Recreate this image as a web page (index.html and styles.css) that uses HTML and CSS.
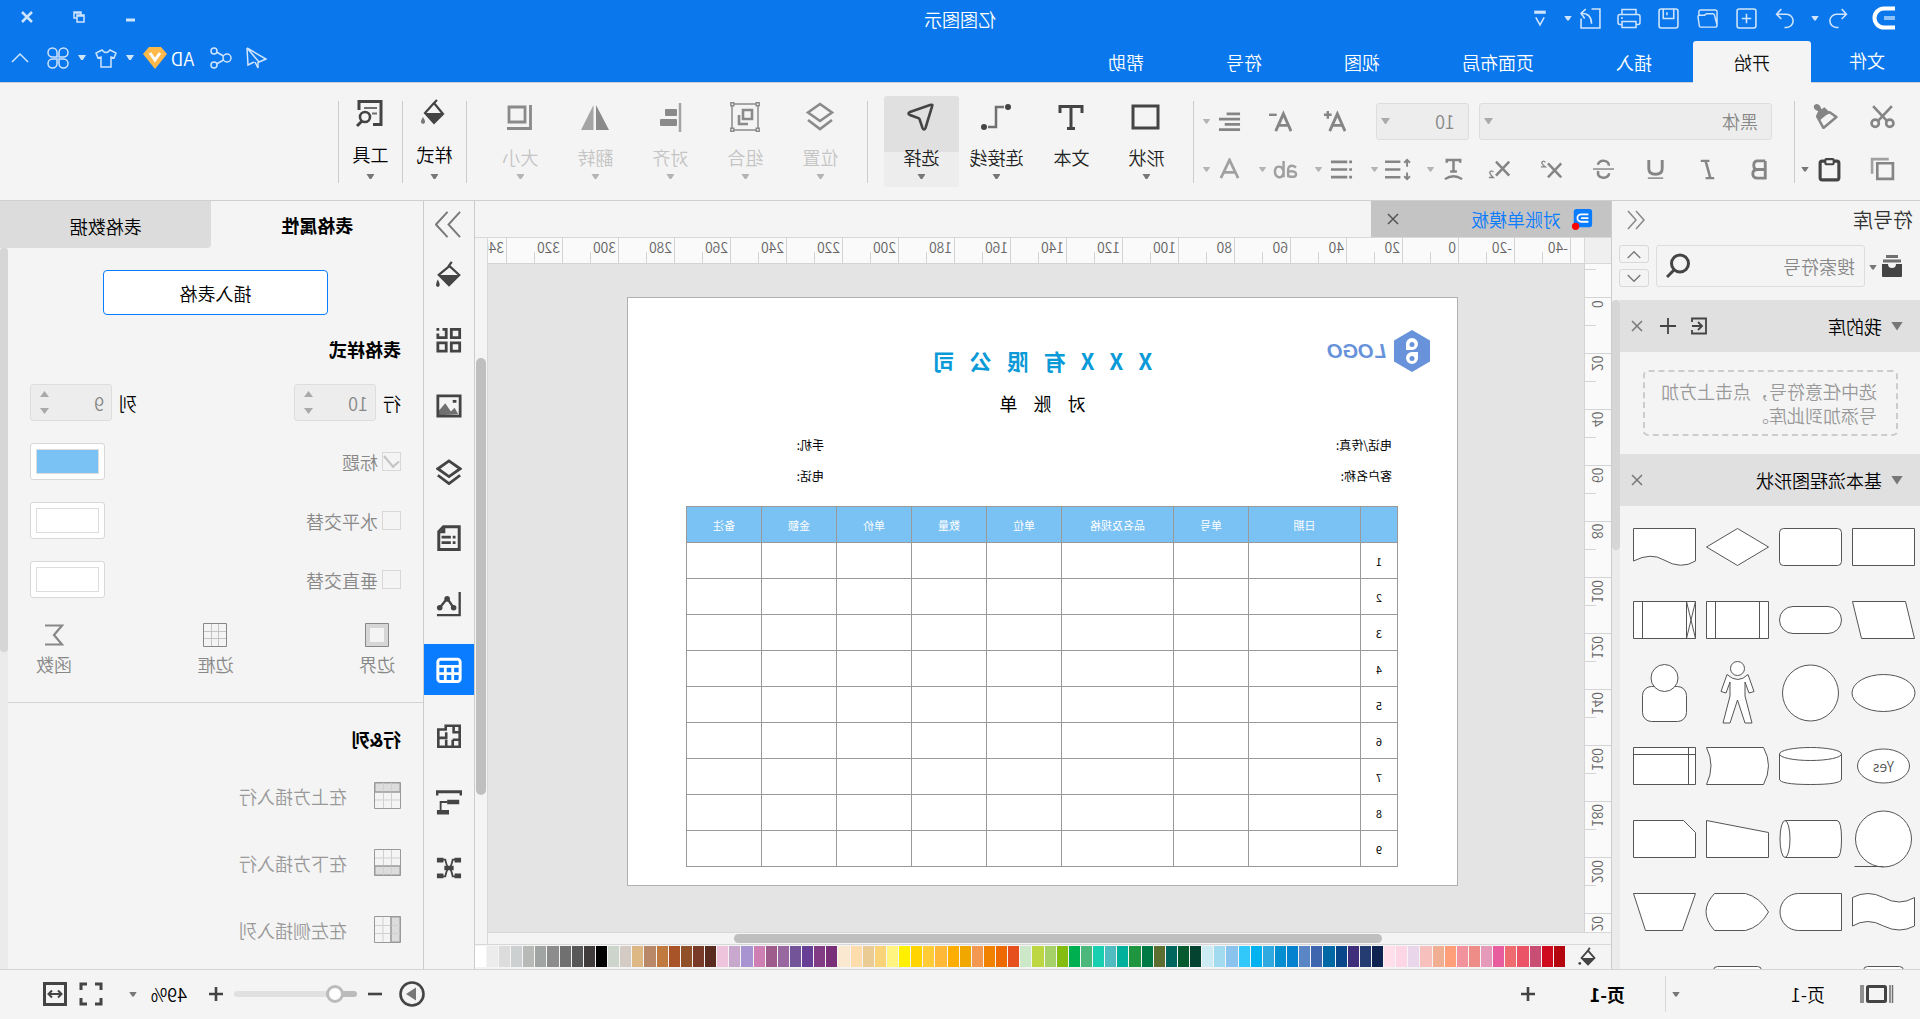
FILE: index.html
```html
<!DOCTYPE html>
<html lang="zh-CN">
<head>
<meta charset="utf-8">
<title>亿图图示</title>
<link rel="stylesheet" href="styles.css">
</head>
<body>
<div class="app">

<header class="top">
  <div class="titlebar">
    <div class="quick">
      <svg class="brand" viewBox="0 0 24 24" width="24" height="24"><path d="M1 2.500H12a9.500 9.500 0 0 1 0 19H1" stroke="#fff" stroke-width="4"/><path d="M1 12H12" stroke="#8cc0f8" stroke-width="4"/></svg>
      <button class="q" aria-label="撤销"><svg viewBox="0 0 20 20"><path d="M6 1 1.500 6 6 10.500M2 6h9a6 6 0 0 1 0 12.500H9"/></svg></button>
      <i class="caret light"></i>
      <button class="q" aria-label="重做"><svg viewBox="0 0 20 20"><path d="M14 1l4.500 5L14 10.500M18 6H9a6 6 0 0 0 0 12.500h2"/></svg></button>
      <button class="q" aria-label="新建"><svg viewBox="0 0 20 20"><rect x="1" y="1" width="18" height="18" rx="2"/><path d="M10 5.500v9M5.500 10h9"/></svg></button>
      <button class="q" aria-label="打开"><svg viewBox="0 0 22 20"><path d="M1 17V3q0-2 2-2h15q2 0 2 2v4M3 19h15q1 0 1.500-1L21 8q0-1.500-2-1.500h-5L12 5H5.500q-1.500 0-2 2L1 17q0 2 2 2z"/></svg></button>
      <button class="q" aria-label="保存"><svg viewBox="0 0 20 20"><rect x="1" y="1" width="18" height="18" rx="2"/><path d="M5 1v9h10V1M11.500 4v3"/></svg></button>
      <button class="q wide" aria-label="打印"><svg viewBox="0 0 24 20"><path d="M5 6V1h14v5M5 16H3q-2 0-2-2V8q0-2 2-2h18q2 0 2 2v6q0 2-2 2h-2M5 13h14v6H5zM18 9.500h2"/></svg></button>
      <button class="q" aria-label="导出"><svg viewBox="0 0 20 20"><path d="M9 1H1v18h18v-9M19 5Q9 5 9 15M14.500 1 19 5l-3.500 5"/></svg></button>
      <i class="caret light"></i>
      <button class="q last" aria-label="自定义"><svg viewBox="0 0 20 20"><path d="M5 4h11" stroke-width="3"/><path d="M6.500 9l4 7 4-7"/></svg></button>
    </div>
    <h1>亿图图示</h1>
    <div class="win">
      <button aria-label="最小化"><svg viewBox="0 0 14 14"><path d="M3 10h9" stroke-width="3"/></svg></button>
      <button aria-label="还原"><svg viewBox="0 0 14 14"><path d="M2 5h7v7H2zM5 5V2h7v6H9M2 6h7M5 3h7"/></svg></button>
      <button aria-label="关闭"><svg viewBox="0 0 14 14"><path d="M2 2l10 10M12 2L2 12" stroke-width="2.500"/></svg></button>
    </div>
  </div>
  <nav class="menubar">
    <button class="tab file">文件</button>
    <button class="tab on">开始</button>
    <button class="tab">插入</button>
    <button class="tab">页面布局</button>
    <button class="tab">视图</button>
    <button class="tab">符号</button>
    <button class="tab">帮助</button>
    <div class="account">
      <svg viewBox="0 0 22 22"><path d="M20 1 1 12l7 3zM20 1l-1 17-6-3M8 15l12-14M9 15v6l3-6"/></svg>
      <svg viewBox="0 0 22 22"><circle cx="5" cy="11" r="4"/><circle cx="18" cy="4" r="3"/><circle cx="18" cy="18" r="3"/><path d="M8.500 9l7-4M8.500 13l7 4"/></svg>
      <span class="user">AD<svg viewBox="0 0 24 22"><path d="M6 0h12l6 7-12 15L0 7z" fill="#ffb84a" stroke="none"/><path d="M7 6l5 7 5-7" stroke="#fff" stroke-width="3"/></svg></span>
      <i class="caret light"></i>
      <svg viewBox="0 0 22 22"><path d="M7 3 1 6l2 5 3-1v10h10V10l3 1 2-5-6-3q-4 5-8 0z"/></svg>
      <i class="caret light"></i>
      <svg viewBox="0 0 22 22"><path d="M10 10V5.500a4.500 4.500 0 1 0-4.500 4.500zM12 10h4.500A4.500 4.500 0 1 0 12 5.500zM10 12H5.500a4.500 4.500 0 1 0 4.500 4.500zM12 12v4.500a4.500 4.500 0 1 0 4.500-4.500z"/></svg>
      <svg class="chev" viewBox="0 0 22 22"><path d="M3 15l8-8 8 8"/></svg>
    </div>
  </nav>
</header>

<section class="ribbon">
  <div class="clip">
    <button aria-label="剪切"><svg viewBox="0 0 24 24"><path d="M3 2l13 14M21 2L8 16" stroke-width="2.500"/><circle cx="5" cy="18.500" r="3.500" stroke-width="2.500"/><circle cx="19" cy="18.500" r="3.500" stroke-width="2.500"/></svg></button>
    <button aria-label="格式刷"><svg viewBox="0 0 24 24"><path d="M8 8 1.500 12.500 14 23l6-11z" stroke-width="2.400" stroke-linejoin="round"/><path d="M8 8l5-5 3 2q1-5 5-5 3 1 2 4-1 2-4 3l2 4-3 5z" fill="currentColor" stroke="none"/></svg></button>
    <button aria-label="复制"><svg viewBox="0 0 24 24"><path d="M2 6h15v15H2z" stroke-width="2.500"/><path d="M6 2h16v14" stroke-width="2.500" opacity=".75"/></svg></button>
    <button class="dark" aria-label="粘贴"><svg viewBox="0 0 24 24"><rect x="3" y="4" width="18" height="18" rx="2" stroke-width="3"/><rect x="8" y="2" width="8" height="5" rx="1" fill="#f4f4f4" stroke-width="2"/></svg><i class="caret"></i></button>
  </div>
  <div class="font">
    <div class="line one">
      <select class="face" aria-label="字体"><option>黑体</option></select>
      <select class="size" aria-label="字号"><option>10</option></select>
      <button class="w54" aria-label="增大字号"><svg viewBox="0 0 24 24"><path d="M1 22 9 4l8 18M4 16h10" stroke-width="3"/><path d="M15 5h8M19 1v8" stroke-width="2.500"/></svg></button>
      <button class="w54" aria-label="减小字号"><svg viewBox="0 0 24 24"><path d="M1 22 9 4l8 18M4 16h10" stroke-width="3"/><path d="M16 5h8" stroke-width="2.500"/></svg></button>
      <button class="split" aria-label="对齐"><svg viewBox="0 0 24 24"><path d="M1 4h14M1 9.500h22M1 15h16M1 20.500h22" stroke-width="2.800"/></svg><i class="caret pale"></i></button>
    </div>
    <div class="line two">
      <button aria-label="加粗"><svg viewBox="0 0 24 24"><path d="M6 3h8q4 0 4 4.500T14 12H6M14 12q5 0 5 4.500T14 21H6V3" stroke-width="3"/></svg></button>
      <button aria-label="斜体"><svg viewBox="0 0 24 24"><path d="M10 3h9M5 21h9M14 3l-5 18" stroke-width="2.600"/></svg></button>
      <button aria-label="下划线"><svg viewBox="0 0 24 24"><path d="M5 2v9q0 6 7 6t7-6V2" stroke-width="3"/><path d="M4 21h16" stroke-width="1.500"/></svg></button>
      <button aria-label="删除线"><svg viewBox="0 0 24 24"><path d="M18 7q-2-5-7-4-5 1-4.500 5M6 16q1 5 7 4.500 6-1 4.500-7" stroke-width="2.600"/><path d="M1 11.500h22" stroke-width="1.500"/></svg></button>
      <button aria-label="上标"><svg viewBox="0 0 26 24"><path d="M2 5l15 16M17 5L2 21" stroke-width="2.800"/><path d="M20 4q2-3 4 0 0 2-4 5h5" stroke-width="1.500"/></svg></button>
      <button aria-label="下标"><svg viewBox="0 0 26 24"><path d="M2 3l15 16M17 3L2 19" stroke-width="2.800"/><path d="M20 15q2-3 4 0 0 2-4 6h5" stroke-width="1.500"/></svg></button>
      <button class="split" aria-label="文字方向"><svg viewBox="0 0 24 24"><path d="M5 5V2h14v3M12 2v12M8.500 14h7" stroke-width="2.600"/><path d="M3 22q9-6 18 0" stroke-width="2.400"/></svg><i class="caret pale"></i></button>
      <button class="split" aria-label="行距"><svg class="xl" viewBox="0 0 28 24"><path d="M11 4h16M11 12h16M11 20h16" stroke-width="2.600"/><path d="M4 2v7M1 5l3-3 3 3M4 22v-7M1 19l3 3 3-3" stroke-width="2"/></svg><i class="caret pale"></i></button>
      <button class="split" aria-label="项目符号"><svg viewBox="0 0 24 24"><path d="M6 4h17M6 12h17M6 20h17M1 4h3M1 12h3M1 20h3" stroke-width="2.800"/></svg><i class="caret pale"></i></button>
      <button class="split faint" aria-label="文字底色"><svg class="xl" viewBox="0 0 26 24"><path d="M2 10q4-3 7-1 2 1 1 11M10 14q-8-1-8 3t8 2M15 3v17M15 14q1-5 5-5t4 5-4 6-5-5" stroke-width="2.600"/></svg><i class="caret pale"></i></button>
      <button class="split faint" aria-label="字体颜色"><svg viewBox="0 0 24 24"><path d="M3 21 12 2l9 19M6 15h12" stroke-width="2.800"/></svg><i class="caret pale"></i></button>
    </div>
  </div>
  <div class="group">
    <button class="big"><svg viewBox="0 0 30 30"><rect x="3" y="4" width="25" height="22" stroke-width="3"/></svg><span>形状</span><i class="caret"></i></button>
    <button class="big"><svg viewBox="0 0 30 30"><path d="M4 11V4.500h22V11M15 5v21" stroke-width="3"/><path d="M11 26.500h8" stroke-width="3"/></svg><span>文本</span></button>
    <button class="big"><svg viewBox="0 0 30 30"><circle cx="3" cy="5" r="3" fill="currentColor" stroke="none"/><circle cx="27" cy="25" r="3" fill="currentColor" stroke="none"/><path d="M7 5h8v20h8" stroke-width="2.500" opacity=".75"/></svg><span>连接线</span><i class="caret"></i></button>
    <button class="big on"><svg viewBox="0 0 30 30"><path d="M4 4.500q-1.500-2.500 2-1.500l20 7q3 1.500 0 3l-8 3q-1 0-1.500 1l-3 9q-1.500 3-3 0z" stroke-width="2.600"/></svg><span>选择</span><i class="caret"></i></button>
  </div>
  <div class="group">
    <button class="big off"><svg viewBox="0 0 30 30"><path d="M15 2 27 10.500 15 19 3 10.500zM3 18l12 9 12-9" stroke-width="2.600"/></svg><span>位置</span><i class="caret pale"></i></button>
    <button class="big off"><svg viewBox="0 0 30 30"><path d="M2 2h26v26H2z" stroke-width="1.500"/><path d="M8 8h9v9H8zM21 13v9h-9" stroke-width="2.600"/><path d="M.800.800h3v3h-3zM26.200.800h3v3h-3zM.800 26.200h3v3h-3zM26.200 26.200h3v3h-3z" fill="#f4f4f4" stroke-width="1.400"/></svg><span>组合</span><i class="caret pale"></i></button>
    <button class="big off"><svg viewBox="0 0 30 30"><path d="M5 1v29" stroke-width="2.500" opacity=".75"/><rect x="8" y="7" width="12" height="7" rx="1" fill="currentColor" stroke="none"/><rect x="8" y="17" width="17" height="7" rx="1" fill="currentColor" stroke="none"/></svg><span>对齐</span><i class="caret pale"></i></button>
    <button class="big off"><svg viewBox="0 0 30 30"><path d="M14 3v25H1z" fill="currentColor" stroke="none"/><path d="M16.500 3v25H29z" fill="currentColor" stroke="none" opacity=".75"/></svg><span>翻转</span><i class="caret pale"></i></button>
    <button class="big off"><svg viewBox="0 0 30 30"><path d="M10 5h16v15H10z" stroke-width="2.800"/><path d="M4.500 3v23.500H28" stroke-width="2.800"/></svg><span>大小</span><i class="caret pale"></i></button>
  </div>
  <div class="group slim">
    <button class="big"><svg viewBox="0 0 30 30"><path d="M12 2l3 3-9 11 9 9 9-10-9-10" stroke-width="2.200"/><path d="M6 15h18l-9 10z" fill="currentColor" stroke="none"/><path d="M26 19q4 6 0 7-4-1 0-7z" fill="currentColor" stroke="none" opacity=".7"/></svg><span>样式</span><i class="caret"></i></button>
  </div>
  <div class="group slim">
    <button class="big"><svg viewBox="0 0 30 30"><path d="M12 26.500H4v-23h22V12" stroke-width="3"/><path d="M8 10h13M8 15.500h5" stroke-width="2.200" opacity=".75"/><circle cx="20" cy="19" r="5" stroke-width="2.600"/><path d="M23 23l5 5" stroke-width="3"/></svg><span>工具</span><i class="caret"></i></button>
  </div>
</section>

<main class="work">

<aside class="library">
  <div class="libhead"><span>符号库</span><svg viewBox="0 0 20 20"><path d="M10 1 2 10l8 9M18 1l-8 9 8 9"/></svg></div>
  <div class="find">
    <svg class="drawer" viewBox="0 0 22 22"><path d="M5 1.500h12M2 6h18" stroke-width="3" opacity=".75"/><path d="M1 9h6q0 4 4 4t4-4h6v12q0 1-1 1H2q-1 0-1-1z" fill="currentColor" stroke="none"/></svg>
    <i class="caret"></i>
    <label class="box"><input type="text" placeholder="搜索符号" aria-label="搜索符号"><svg viewBox="0 0 24 24"><circle cx="10" cy="9.500" r="8.500" stroke-width="3"/><path d="M16 16l7 7" stroke-width="3"/></svg></label>
    <div class="updown">
      <button aria-label="上一个"><svg viewBox="0 0 20 12"><path d="M3 10l7-7 7 7"/></svg></button>
      <button aria-label="下一个"><svg viewBox="0 0 20 12"><path d="M3 2l7 7 7-7"/></svg></button>
    </div>
  </div>
  <div class="libbody">
    <div class="libscroll">
      <div class="sect"><i class="tri"></i><b>我的库</b>
        <svg viewBox="0 0 18 18"><path d="M16 5V1.500H2v15h14V13" stroke-width="1.800"/><path d="M16 9H6M10 5 6 9l4 4" stroke-width="1.800"/></svg>
        <svg viewBox="0 0 18 18"><path d="M9 1v16M1 9h16" stroke-width="1.800"/></svg>
        <svg class="x" viewBox="0 0 18 18"><path d="M4 4l10 10M14 4L4 14"/></svg></div>
      <p class="hint">选中任意符号，点击上方加号添加到此库。</p>
      <div class="sect"><i class="tri"></i><b>基本流程图形状</b>
        <svg class="x" viewBox="0 0 18 18"><path d="M4 4l10 10M14 4L4 14"/></svg></div>
      <div class="shapes">
        <svg viewBox="0 0 73 73"><path d="M5.500 18.500h62v37h-62z"/></svg>
        <svg viewBox="0 0 73 73"><rect x="5.500" y="18.500" width="62" height="37" rx="4"/></svg>
        <svg viewBox="0 0 73 73"><path d="M36.500 18.500 67.500 37l-31 18.500L5.500 37z"/></svg>
        <svg viewBox="0 0 73 73"><path d="M5.500 18.500h62V51Q50 42 37 50 20 60 5.500 51z"/></svg>
        <svg viewBox="0 0 73 73"><path d="M14.500 18.500h53l-9 37h-53z"/></svg>
        <svg viewBox="0 0 73 73"><rect x="5.500" y="23.500" width="62" height="27" rx="13.500"/></svg>
        <svg viewBox="0 0 73 73"><path d="M5.500 18.500h62v37h-62zM14.500 18.500v37M58.500 18.500v37"/></svg>
        <svg viewBox="0 0 73 73"><path d="M5.500 18.500h62v37h-62zM14.500 18.500v37M58.500 18.500v37M5.500 18.500l9 37M14.500 18.500l-9 37"/></svg>
        <svg viewBox="0 0 73 73"><ellipse cx="36.500" cy="37" rx="31.500" ry="18.500"/></svg>
        <svg viewBox="0 0 73 73"><circle cx="36.500" cy="37" r="28"/></svg>
        <svg viewBox="0 0 73 73"><circle cx="36.500" cy="12.500" r="7"/><path d="M26 18.500q10 10 21 0l6 17-5 1.500-4-11V40l7 27h-7l-7.500-23L29 67h-7l7-27V26l-4 11-5-1.500z"/></svg>
        <svg viewBox="0 0 73 73"><rect x="14.500" y="30.500" width="44" height="35" rx="9"/><circle cx="36.500" cy="22" r="13.500"/></svg>
        <svg viewBox="0 0 73 73"><ellipse cx="36.500" cy="37" rx="26" ry="17"/><text x="36.500" y="43">Yes</text></svg>
        <svg viewBox="0 0 73 73"><path d="M5.500 25v25q0 5.500 31 5.500t31-5.500V25"/><ellipse cx="36.500" cy="25" rx="31" ry="6.500"/></svg>
        <svg viewBox="0 0 73 73"><path d="M10.500 18.500h57q-9 18 0 37h-57q-10-19 0-37z"/></svg>
        <svg viewBox="0 0 73 73"><path d="M5.500 18.500h62v37h-62zM12.500 18.500v37M5.500 25.500h62"/></svg>
        <svg viewBox="0 0 73 73"><circle cx="36.500" cy="37" r="28"/><path d="M36.500 64.500h29"/></svg>
        <svg viewBox="0 0 73 73"><path d="M62 18.500H10Q5.500 19 5.500 37T10 55.500h52"/><ellipse cx="62" cy="37" rx="5" ry="18.500"/></svg>
        <svg viewBox="0 0 73 73"><path d="M5.500 30.500l62-12v37h-62z"/></svg>
        <svg viewBox="0 0 73 73"><path d="M17.500 18.500h50v37h-62v-25z"/></svg>
        <svg viewBox="0 0 73 73"><path d="M5.500 22.500q15 9 31 0 16-8 31 0V51q-15-9-31 0-16 8-31 0z"/></svg>
        <svg viewBox="0 0 73 73"><path d="M5.500 18.500h43a18.500 18.500 0 0 1 0 37h-43z"/></svg>
        <svg viewBox="0 0 73 73"><path d="M5.500 37q9-15 23-18.500h31q17 18 0 37h-31Q14 52 5.500 37z"/></svg>
        <svg viewBox="0 0 73 73"><path d="M5.500 18.500h62l-12 37h-37z"/></svg>
        <svg viewBox="0 0 73 73"><rect x="16.500" y="18.500" width="40" height="37" rx="4"/></svg>
        <svg viewBox="0 0 73 73"></svg>
        <svg viewBox="0 0 73 73"><rect x="12.500" y="18.500" width="48" height="37" rx="4"/></svg>
      </div>
    </div>
    <div class="bar"><i class="thumb lib"></i></div>
  </div>
</aside>

<section class="editor">
  <div class="doctabs"><div class="doctab">
    <svg viewBox="0 0 24 24"><rect x="1" y="1" width="20" height="20" rx="3" fill="#0a7cff" stroke="none"/><path d="M5 7h8a4 4 0 0 1 0 8H5M5 11h8" stroke="#fff" stroke-width="2"/><circle cx="19" cy="20" r="4" fill="#f00" stroke="none"/></svg>
    <a href="#doc">对账单模板</a>
    <svg class="x" viewBox="0 0 18 18"><path d="M4 4l10 10M14 4L4 14"/></svg>
  </div></div>
  <div class="stage">
    <div class="corner"></div>
    <div class="ruler h" id="rh"></div>
    <div class="vbar"><i class="thumb tall"></i></div>
    <div class="ruler v" id="rv"></div>
    <div class="canvas">
      <article class="sheet" id="doc">
        <header class="sheethead">
          <div class="logo"><svg viewBox="0 0 36 42"><path d="M18 0l18 10.500v21L18 42 0 31.500v-21z" fill="#6893da" stroke="none"/><path d="M24 20V14a6 6 0 1 0-6 6zM12 22h6a6 6 0 1 1-6 6z" fill="#fff" stroke="none"/><circle cx="18" cy="14.500" r="2.500" fill="#6893da" stroke="none"/><circle cx="18" cy="28.500" r="2.500" fill="#6893da" stroke="none"/></svg><em>LOGO</em></div>
          <h2>X   X   X   有   限   公   司</h2>
        </header>
        <h3>对    账    单</h3>
        <div class="contact"><span>电话/传真:</span><span>手机:</span><span>客户名称:</span><span>电话:</span></div>
        <table>
          <colgroup><col class="c0"><col class="c2"><col class="c1"><col class="c2"><col class="c1"><col class="c1"><col class="c1"><col class="c1"><col class="c1"></colgroup>
          <thead><tr><th></th><th>日期</th><th>单号</th><th>品名及规格</th><th>单位</th><th>数量</th><th>单价</th><th>金额</th><th>备注</th></tr></thead>
          <tbody>
            <tr><td>1</td><td></td><td></td><td></td><td></td><td></td><td></td><td></td><td></td></tr>
            <tr><td>2</td><td></td><td></td><td></td><td></td><td></td><td></td><td></td><td></td></tr>
            <tr><td>3</td><td></td><td></td><td></td><td></td><td></td><td></td><td></td><td></td></tr>
            <tr><td>4</td><td></td><td></td><td></td><td></td><td></td><td></td><td></td><td></td></tr>
            <tr><td>5</td><td></td><td></td><td></td><td></td><td></td><td></td><td></td><td></td></tr>
            <tr><td>6</td><td></td><td></td><td></td><td></td><td></td><td></td><td></td><td></td></tr>
            <tr><td>7</td><td></td><td></td><td></td><td></td><td></td><td></td><td></td><td></td></tr>
            <tr><td>8</td><td></td><td></td><td></td><td></td><td></td><td></td><td></td><td></td></tr>
            <tr><td>9</td><td></td><td></td><td></td><td></td><td></td><td></td><td></td><td></td></tr>
          </tbody>
        </table>
      </article>
    </div>
    <div class="hbar"><i class="thumb wide"></i></div>
  </div>
  <div class="palette">
    <svg viewBox="0 0 24 24"><path d="M10 2l2 3-7 8 7 7 7-7-7-8" stroke-width="2"/><path d="M5 13h14l-7 8z" fill="currentColor" stroke="none"/><circle cx="21" cy="19" r="1.500" fill="currentColor" stroke="none"/></svg>
    <div class="chips" id="chips"></div>
  </div>
</section>

<nav class="strip">
  <button class="fold" aria-label="收起"><svg viewBox="0 0 28 28"><path d="M2 1l12 13L2 27M15 1l12 13-12 13" stroke-width="2" opacity=".7"/></svg></button>
  <button aria-label="填充"><svg viewBox="0 0 28 28"><path d="M11 1l3 4L3 15l11 11 11-11L13 5" stroke-width="2.400"/><path d="M3 15h22L14 27z" fill="currentColor" stroke="none"/><path d="M26 20q4 7 0 8-4-1 0-8z" fill="currentColor" stroke="none"/></svg></button>
  <button aria-label="符号"><svg viewBox="0 0 28 28"><path d="M2.500 2.500h9v9h-9zM2.500 17h9v9h-9zM17 17h9v9h-9zM21 2.500h-4v9h9V7M24.500 2.500h3" stroke-width="3"/></svg></button>
  <button aria-label="图片"><svg viewBox="0 0 28 28"><path d="M2 3h24v22H2z" stroke-width="3"/><path d="M4 23l4-7 4 4 6-9 7 8v5z" fill="currentColor" stroke="none" opacity=".75"/><path d="M6 9h4" stroke-width="3"/></svg></button>
  <button aria-label="图层"><svg viewBox="0 0 28 28"><path d="M14 2 26 10.500 14 19 2 10.500zM2 17.500l12 9 12-9" stroke-width="3"/></svg></button>
  <button aria-label="页面"><svg viewBox="0 0 28 28"><path d="M3 2h17l5 5v19.500H3z" stroke-width="3.200"/><path d="M7 13h3M12 13h10M7 19h3M12 19h10" stroke-width="3"/><path d="M18 2v7h7z" fill="currentColor" stroke="none"/></svg></button>
  <button aria-label="图表"><svg viewBox="0 0 28 28"><path d="M2.500 1v25H27M9 18l7-10 8 10" stroke-width="2.500"/><circle cx="9" cy="18" r="3" fill="currentColor" stroke="none"/><circle cx="16" cy="8.500" r="3" fill="currentColor" stroke="none"/><circle cx="24" cy="18" r="3" fill="currentColor" stroke="none"/></svg></button>
  <button class="on" aria-label="表格"><svg viewBox="0 0 28 28"><rect x="2" y="2.500" width="24" height="24" rx="3" stroke-width="3.200"/><path d="M2 10h24M2 18h24M10 10v16M18 10v16" stroke-width="3"/></svg></button>
  <button aria-label="平面图"><svg viewBox="0 0 28 28"><path d="M2.500 3h15v4h8v18.500h-23zM3 10h6V4M3 18h7M10 18v7M17 10v6h8M17 18v8" stroke-width="2.800"/></svg></button>
  <button aria-label="甘特图"><svg viewBox="0 0 28 28"><path d="M1 7V3h26v4" stroke-width="3.200"/><path d="M3 14h13M14 25h13" stroke-width="5"/><path d="M16 14h7v11" stroke-width="2"/></svg></button>
  <button aria-label="思维导图"><svg viewBox="0 0 28 28"><path d="M4 5h6q2 9 4 9t4-9h6M4 23h6q2-9 4-9t4 9h6" stroke-width="2"/><path d="M1 5.500h7M20 5.500h7M1 22.500h7M20 22.500h7M9 14h10" stroke-width="5"/></svg></button>
</nav>

<aside class="props">
  <div class="ptabs"><button class="on">表格属性</button><button>表格数据</button></div>
  <div class="pwrap">
    <div class="pbody">
      <div class="pad">
        <button class="insert">插入表格</button>
        <h4>表格样式</h4>
        <div class="row">
          <label class="num">行<span class="spin"><input type="text" value="10" disabled><b class="up"></b><b class="dn"></b></span></label>
          <label class="num">列<span class="spin"><input type="text" value="9" disabled><b class="up"></b><b class="dn"></b></span></label>
        </div>
        <div class="row"><label class="chk"><input type="checkbox" checked disabled>标题</label><button class="well blue" aria-label="标题颜色"><i></i></button></div>
        <div class="row"><label class="chk"><input type="checkbox" disabled>水平交替</label><button class="well" aria-label="水平交替颜色"><i></i></button></div>
        <div class="row"><label class="chk"><input type="checkbox" disabled>垂直交替</label><button class="well" aria-label="垂直交替颜色"><i></i></button></div>
        <div class="trio">
          <button><svg viewBox="0 0 24 24"><path d="M2.500 2.500h19v19h-19z" stroke="#d6d6d6" stroke-width="5"/><path d="M.500.500h23v23H.500z"/></svg>边界</button>
          <button><svg viewBox="0 0 24 24"><path d="M8.500 1v22M15.500 1v22M1 8.500h22M1 15.500h22" stroke="#c4c4c4"/><path d="M.500.500h23v23H.500z"/></svg>边框</button>
          <button><svg viewBox="0 0 24 24"><path d="M21 2.500H4l8 9.500-8 9.500h17" stroke-width="2.200"/></svg>函数</button>
        </div>
      </div>
      <hr>
      <div class="pad">
        <h4 class="rc">行&amp;列</h4>
        <button class="act"><svg viewBox="0 0 27 27"><path d="M1 1h25v9H1z" fill="#dcdcdc"/><path d="M9.500 1v25M17.500 1v25M1 18h25" stroke="#d0d0d0"/><path d="M1 10h25M.500.500h26v26H.500z"/></svg>在上方插入行</button>
        <button class="act"><svg viewBox="0 0 27 27"><path d="M1 17h25v9H1z" fill="#dcdcdc"/><path d="M9.500 1v25M17.500 1v25M1 9h25" stroke="#d0d0d0"/><path d="M1 17h25M.500.500h26v26H.500z"/></svg>在下方插入行</button>
        <button class="act"><svg viewBox="0 0 27 27"><path d="M1 1h9v25H1z" fill="#dcdcdc"/><path d="M18 1v25M1 9.500h25M1 17.500h25" stroke="#d0d0d0"/><path d="M10 1v25M.500.500h26v26H.500z"/></svg>在左侧插入列</button>
      </div>
    </div>
    <div class="bar"><i class="thumb prop"></i></div>
  </div>
</aside>
</main>

<footer class="status">
  <div class="pages">
    <svg viewBox="0 0 34 20"><rect x="8.500" y="2.500" width="18" height="15" rx="1" stroke-width="3"/><path d="M1.500 1v18M33 1v18M4 1v18M31 1v18" stroke-width="1.500" opacity=".75"/></svg>
    <span class="pname">页-1</span><i class="caret"></i>
  </div>
  <b class="current">页-1</b>
  <button class="ic" aria-label="添加页"><svg viewBox="0 0 16 16"><path d="M8 1v14M1 8h14" stroke-width="2.600"/></svg></button>
  <div class="zoom">
    <svg class="play" viewBox="0 0 26 26"><circle cx="13" cy="13" r="11.500" stroke-width="2.600"/><path d="M9 6.500l10 6.500-10 6.500z" fill="#777" stroke="none"/></svg>
    <button class="ic minus" aria-label="缩小"><svg viewBox="0 0 16 16"><path d="M1 8h14" stroke-width="2.600"/></svg></button>
    <input type="range" min="0" max="100" value="12" aria-label="缩放">
    <button class="ic plus" aria-label="放大"><svg viewBox="0 0 16 16"><path d="M8 1v14M1 8h14" stroke-width="2.600"/></svg></button>
    <span class="pct">49%</span><i class="caret"></i>
    <svg class="full" viewBox="0 0 24 24"><path d="M2 8V2h6M16 2h6v6M22 16v6h-6M8 22H2v-6" stroke-width="3"/></svg>
    <svg class="fit" viewBox="0 0 24 24"><path d="M1.500 1.500h21v21h-21z" stroke-width="3"/><path d="M6 12h12M9 8.500 5.500 12 9 15.500M15 8.500l3.500 3.500-3.500 3.500" stroke-width="2"/></svg>
  </div>
</footer>
</div>
<script src="app.js"></script>
</body>
</html>
```
FILE: app.js
```js
function fillRuler(id, from, to) {
  const ruler = document.getElementById(id);
  for (let n = from; n <= to; n += 20) {
    const mark = document.createElement('span');
    mark.textContent = n;
    ruler.append(mark);
  }
}
fillRuler('rh', -40, 340);
fillRuler('rv', 0, 220);

const colors = (
  'b5060f cf0a1e c84e74 ea5466 ee6c70 e85d9d e49ab8 ee8d88 f2929c ff9f7a f0ae93 f7c0bd ead6ea fcd6e4 ffe0ea ' +
  '0e2350 243c72 3f2f7a 0a478a 0068a5 3e66ae 5a86c5 0482d0 058fd0 2fa9e0 00b3f0 32c8fa 8ac4ee a2daf0 cdebf2 ' +
  '04432f 065a30 00665e 5c6e30 007a44 20953f 00b09c 50bcc0 18d0b0 4cb87c 00b050 84bc10 a6d068 bcd742 cce8c8 ' +
  'e5501e ec6a00 f08200 f39850 f0a800 ffae00 ffb838 ffcc38 ffd400 fff000 fff480 fad278 eacb94 ffdcac fae8d0 ' +
  '7a3078 823c84 673f94 745498 9a68a0 9e5c8c ce80b4 a894d0 c8a8cc eec4dc ' +
  '5a2c20 7a3a28 905028 a85428 c07a40 b88868 deb884 d4ccc4 ccd4cc ' +
  '000000 403c3c 585858 707070 8c8c8c a0a4a2 b8bab8 ccd0d0 dcdcdc ececec ffffff'
).split(' ');
const chips = document.getElementById('chips');
for (const c of colors) {
  const chip = document.createElement('i');
  chip.style.background = '#' + c;
  chips.append(chip);
}
```
FILE: styles.css
```css
* { box-sizing: border-box; }
body { margin: 0; background: #f4f4f4; overflow: hidden; }
.app {
  height: 100vh;
  display: flex;
  flex-direction: column;
  transform: scaleX(-1);
  font: 350 18px/24px "Noto Sans CJK SC", sans-serif;
  color: #000;
  background: #f4f4f4;
}
button, input, select { font: inherit; color: inherit; margin: 0; padding: 0; border: 0; background: none; border-radius: 0; }
h1, h2, h3, h4, p { margin: 0; font: inherit; }
svg { display: block; flex: none; fill: none; stroke: currentColor; }
i { font-style: normal; }
.caret { flex: none; width: 8px; height: 5px; background: #777; clip-path: polygon(0 0, 100% 0, 60% 100%, 40% 100%); }
.caret.light { background: #cfe4fd; }
.caret.pale { background: #b4b4b4; }

/* title bar and menu */
.top { flex: none; background: #0a78ec; color: #fff; border-bottom: 1px solid #d0d0d0; }
.titlebar { height: 41px; display: grid; grid-template-columns: 1fr auto 1fr; }
.titlebar h1 { line-height: 38px; }
.quick { display: flex; align-items: center; height: 36px; padding-left: 24px; color: #cfe4fd; }
.brand { margin-right: 15px; }
.q { width: 39px; display: flex; justify-content: center; }
.q svg { width: 21px; height: 21px; stroke-width: 1.5px; }
.q.wide svg { width: 24px; }
.q.last { width: 34px; }
.quick .caret { margin-right: 6px; margin-left: -1px; }
.win { display: flex; justify-content: flex-end; align-items: center; height: 34px; padding-right: 1px; color: #cfe4fd; }
.win button { width: 52px; display: flex; justify-content: center; }
.win svg { width: 14px; height: 14px; stroke-width: 1.5px; }
.menubar { display: flex; height: 41px; }
.tab { padding: 1px 41px 0; line-height: 38px; }
.tab.file { width: 109px; padding: 0 3px 6px 0; }
.tab.on { background: #f4f4f4; color: #111; border-radius: 3px 3px 0 0; margin-bottom: -1px; padding-bottom: 1px; }
.account { margin-left: auto; display: flex; align-items: center; gap: 13px; padding: 0 9px 8px 0; color: #cfe4fd; }
.account svg { width: 22px; height: 22px; stroke-width: 1.5px; }
.account .caret { margin: 0 -4px; }
.account .chev { margin-left: 3px; }
.user { display: flex; align-items: center; gap: 4px; margin-left: 3px; color: #fff; }
.user svg { width: 24px; }

/* ribbon */
.ribbon { flex: none; display: flex; height: 118px; padding-top: 13px; border-bottom: 1px solid #d0d0d0; }
.ribbon > div { height: 91px; border-right: 1px solid transparent; border-image: linear-gradient(transparent 6px, #ccc 6px, #ccc 86px, transparent 86px) 1; }
.ribbon button { display: flex; align-items: center; justify-content: center; color: #858585; }
.ribbon button.dark { color: #444; }
.ribbon button.faint { color: #a0a0a0; }
.clip { width: 126px; display: grid; grid-template-columns: 58px 56px; grid-template-rows: 40px 66px; padding: 0 0 0 8px; align-content: start; }
.clip .dark .caret { margin: 0 -9px 0 8px; }
.clip svg { width: 25px; height: 25px; }
.font { width: 601px; padding: 6px 0 0 8px; }
.line { display: flex; align-items: center; }
.line svg { width: 23px; height: 23px; }
.line.one { height: 38px; padding-left: 14px; }
.line.two { height: 50px; padding-top: 8px; }
.line button { flex: none; width: 52px; }
.line .split { width: 48px; margin-right: 8px; }
.split svg { margin: 0 8px; }
.split .xl { width: 27px; margin: 0 6px; }
.line .w54 { width: 54px; }
.line .size + .w54 { margin-left: 14px; }
.line .w54 + .split { margin-left: 4px; }
select { appearance: none; height: 37px; }
.face, .size {
  border: 1px solid #ddd; border-radius: 3px; padding-left: 13px; color: #888; opacity: 1;
  background: #ededed url("data:image/svg+xml,%3Csvg xmlns='http://www.w3.org/2000/svg' width='9' height='6'%3E%3Cpath d='M0 0h9L5 6H4z' fill='%23aaa'/%3E%3C/svg%3E") right 4px center no-repeat;
}
.face { width: 294px; margin-right: 10px; }
.size { width: 93px; }
.group { display: flex; padding: 0 16px 0 9px; }
.ribbon .big { width: 75px; flex-direction: column; justify-content: flex-start; height: 91px; padding-top: 6px; color: #444; border-radius: 3px; }
.big svg { width: 30px; height: 30px; }
.big span { margin-top: 13px; line-height: 24px; color: #222; }
.big .caret { margin-top: 5px; }
.ribbon .big.on { background: linear-gradient(#e0e0e0 56px, #ededed 56px); }
.ribbon .big.off { color: #8a8a8a; }
.big.off span { color: #c4c4c4; }
.group.slim { padding: 0; }
.ribbon .slim .big { width: 63px; padding-top: 2px; }
.slim .big span { margin-top: 14px; color: #000; }
.slim .big .caret { margin-top: 8px; }

/* work area */
.work { flex: 1; min-height: 0; display: grid; grid-template-columns: 309px 1fr 51px 424px; }
.bar { flex: none; width: 8px; background: #ebebeb; }
.thumb { display: block; background: #d6d6d6; border-radius: 4px; }

/* symbol library */
.library { display: flex; flex-direction: column; min-height: 0; border-right: 1px solid #ccc; }
.libhead { display: flex; align-items: center; justify-content: space-between; height: 37px; padding: 0 14px 0 7px; font-size: 20px; color: #333; }
.libhead svg { width: 20px; height: 20px; color: #888; stroke-width: 1.5px; }
.find { display: flex; align-items: center; height: 48px; padding: 0 7px 0 17px; margin: 4px 0 10px; color: #444; }
.drawer { width: 22px; height: 22px; }
.find .caret { margin: 2px 4px 0; }
.box { display: flex; align-items: center; justify-content: space-between; width: 209px; height: 42px; border: 1px solid #ddd; border-radius: 3px; padding: 0 9px; }
.box input { width: 120px; outline: none; }
.box input::placeholder { color: #888; opacity: 1; }
.box svg { width: 24px; height: 26px; }
.updown { margin-left: 7px; display: grid; gap: 6px; }
.updown button { width: 30px; height: 18px; border: 1px solid #d8d8d8; border-radius: 3px; display: flex; align-items: center; justify-content: center; color: #777; }
.updown svg { width: 18px; height: 11px; stroke-width: 1.5px; }
.libbody { flex: 1; min-height: 0; display: flex; }
.libscroll { flex: 1; min-width: 0; overflow: hidden; }
.sect { display: flex; align-items: center; height: 52px; background: #e0e0e0; padding: 0 8px 0 17px; color: #444; }
.sect b { flex: 1; margin-left: 9px; font-weight: inherit; color: #000; }
.sect svg { width: 18px; height: 18px; margin-right: 13px; }
.sect .x { margin: 0; stroke-width: 1.5px; color: #777; }
.tri { width: 12px; height: 9px; background: #777; clip-path: polygon(0 0, 100% 0, 50% 100%); }
.hint { margin: 18px 23px 18px 22px; height: 66px; padding: 7px 12px 0 19px; border: 2px dashed #ccc; border-radius: 5px; color: #999; }
.shapes { display: grid; grid-template-columns: repeat(4, 73px); padding-top: 4px; }
.shapes svg { width: 73px; height: 73px; stroke: #555; fill: #fff; stroke-width: 1px; }
.shapes text { font-size: 14px; fill: #555; stroke: none; text-anchor: middle; }
.thumb.lib { height: 250px; }

/* editor */
.editor { min-width: 0; min-height: 0; display: flex; flex-direction: column; }
.doctabs { flex: none; height: 37px; border-bottom: 1px solid #d8d8d8; }
.doctab { width: 240px; height: 36px; display: flex; align-items: center; background: #c4c4c4; padding: 0 13px 0 18px; }
.doctab svg { width: 22px; height: 22px; }
.doctab a { flex: 1; margin-left: 10px; color: #0a7cff; text-decoration: none; }
.doctab .x { width: 18px; height: 18px; color: #555; stroke-width: 1.5px; }
.stage { flex: 1; min-height: 0; display: grid; grid-template-columns: 27px 1fr 13px; grid-template-rows: 26px 1fr 13px; }
.corner { background: #efefef; border-right: 1px solid #d8d8d8; border-bottom: 1px solid #d8d8d8; }
.ruler { background: #fafafa; color: #666; font-size: 14px; line-height: 16px; overflow: hidden; display: flex; }
.ruler span { flex: none; }
.ruler.h { border-bottom: 1px solid #d4d4d4; padding-left: 13px; }
.h span { width: 56px; padding: 1px 0 0 2px; border-left: 1px solid #d4d4d4; background: linear-gradient(#d4d4d4, #d4d4d4) 27px 14px / 1px 12px no-repeat; }
.ruler.v { flex-direction: column; border-right: 1px solid #d4d4d4; padding-top: 33px; background: #fafafa linear-gradient(#d4d4d4, #d4d4d4) right 5px / 11px 1px no-repeat; }
.v span { height: 56px; writing-mode: vertical-rl; transform: rotate(180deg); text-align: right; padding: 0 5px 2px 0; border-bottom: 1px solid #d4d4d4; background: linear-gradient(#d4d4d4, #d4d4d4) 0 27px / 11px 1px no-repeat; }
.vbar { grid-row: 1 / 4; grid-column: 3; border: 1px solid #d8d8d8; border-width: 0 0 1px 1px; padding-left: 1px; }
.thumb.tall { width: 10px; height: 437px; margin-top: 120px; border-radius: 5px; background: #bfbfbf; }
.canvas { background: #e4e4e4; min-width: 0; overflow: hidden; padding: 33px 0 0 126px; }
.hbar { grid-column: 1 / 3; border: 1px solid #d8d8d8; border-width: 1px 0; padding: 1px 0 0 229px; }
.thumb.wide { width: 648px; height: 9px; border-radius: 5px; background: #bfbfbf; }
.palette { flex: none; display: flex; height: 24px; padding: 1px 0 2px 12px; color: #444; }
.palette svg { width: 22px; height: 22px; margin-right: 12px; }
.chips { flex: 1; display: flex; gap: 1px; }
.chips i { flex: 1; }

/* statement sheet */
.sheet { width: 831px; height: 589px; background: #fff; border: 1px solid #b0b0b0; padding-top: 32px; font-weight: 400; }
.sheethead { display: grid; grid-template-columns: 1fr auto 1fr; align-items: end; }
.logo { display: flex; align-items: center; gap: 8px; padding-left: 27px; color: #6893da; }
.logo svg { width: 36px; height: 42px; }
.logo em { font: italic bold 20px/24px "Liberation Sans", sans-serif; }
.sheet h2 { font-size: 22px; font-weight: 700; color: #0a9ad8; white-space: pre; }
.sheet h3 { margin-top: 19px; text-align: center; white-space: pre; }
.contact { display: grid; grid-template-columns: 568px 1fr; margin-top: 14px; padding-left: 65px; font-size: 12px; line-height: 31px; }
.sheet table { width: 711px; margin: 15px 0 0 59px; border-collapse: collapse; table-layout: fixed; font-size: 11px; line-height: 16px; text-align: center; }
.c0 { width: 37px; } .c1 { width: 75px; } .c2 { width: 112px; }
.sheet th, .sheet td { height: 36px; padding: 0; border: 1px solid #999; }
.sheet th { background: #7ac1f4; color: #fff; font-weight: 400; }

/* panel switcher */
.strip { border-left: 1px solid #ccc; display: flex; flex-direction: column; gap: 15px; color: #444; overflow: hidden; }
.strip button { flex: none; height: 51px; display: flex; align-items: center; justify-content: center; }
.strip .fold { height: 47px; margin-bottom: -15px; }
.strip .on { background: #0a7cff; color: #fff; }
.strip svg { width: 26px; height: 26px; }
.strip .fold svg { width: 27px; height: 27px; }

/* table properties */
.props { border-left: 1px solid #ccc; display: flex; flex-direction: column; min-height: 0; }
.ptabs { display: grid; grid-template-columns: 1fr 1fr; height: 47px; }
.ptabs button { background: #dcdcdc; border-radius: 0 0 0 4px; padding-top: 3px; }
.ptabs .on { background: none; font-weight: 700; padding: 0; }
.pwrap { flex: 1; min-height: 0; display: flex; }
.pbody { flex: 1; min-width: 0; overflow: hidden; }
.pad { padding: 0 22px; }
.insert { display: block; width: 225px; height: 45px; margin: 22px auto; border: 1px solid #0a7cff; border-radius: 4px; background: #fff; }
.pad h4 { font-weight: 700; margin-bottom: 23px; }
.row { display: flex; align-items: center; justify-content: space-between; height: 37px; margin-bottom: 22px; }
.num { display: flex; align-items: center; gap: 7px; }
.spin { position: relative; width: 82px; height: 37px; border: 1px solid #ddd; border-radius: 3px; background: #ededed; }
.spin input { width: 60px; height: 35px; padding-left: 7px; color: #888; }
.spin b { position: absolute; right: 9px; width: 9px; height: 6px; background: #aaa; }
.spin .up { top: 6px; clip-path: polygon(50% 0, 100% 100%, 0 100%); }
.spin .dn { bottom: 6px; clip-path: polygon(0 0, 100% 0, 50% 100%); }
.chk { display: flex; align-items: center; gap: 4px; color: #888; }
.chk input { appearance: none; width: 19px; height: 19px; border: 1px solid #d8d8d8; display: grid; place-items: center; }
.chk input:checked::after { content: ""; width: 7px; height: 13px; margin-top: -4px; border: 2px solid #c4c4c4; border-width: 0 2px 2px 0; transform: rotate(40deg); }
.well { width: 75px; height: 37px; border: 1px solid #d8d8d8; border-radius: 3px; background: #fff; padding: 5px; }
.well i { display: block; height: 25px; border: 1px solid #ddd; }
.well.blue i { background: #7ac1f4; }
.trio { display: flex; justify-content: space-between; padding: 3px 6px 0; }
.trio button { display: flex; flex-direction: column; align-items: center; gap: 5px; color: #888; }
.trio svg { width: 24px; height: 24px; }
hr { margin: 26px 0 24px; border: 0; border-top: 1px solid #d4d4d4; }
.pad .rc { margin-bottom: 31px; }
.act { display: flex; align-items: center; gap: 27px; height: 27px; margin-bottom: 40px; color: #999; }
.act svg { width: 27px; height: 27px; }
.thumb.prop { height: 404px; }

/* status bar */
.status { flex: none; display: flex; align-items: center; height: 50px; border-top: 1px solid #d4d4d4; color: #444; padding-bottom: 1px; }
.pages { display: flex; align-items: center; width: 255px; height: 36px; padding: 0 6px 0 26px; border-right: 1px solid #d8d8d8; }
.pages svg { width: 34px; height: 20px; }
.pname { flex: 1; margin-left: 35px; color: #000; }
.current { margin-left: 40px; color: #000; }
.ic { display: flex; }
.ic svg { width: 16px; height: 16px; }
.current + .ic { margin-left: 54px; }
.zoom { margin-left: auto; display: flex; align-items: center; padding-right: 43px; }
.play { width: 26px; height: 26px; }
.minus { margin: 0 10px 0 16px; }
.plus { margin: 0 21px 0 10px; }
input[type=range] { appearance: none; width: 123px; height: 6px; border-radius: 3px; background: linear-gradient(90deg, #bbb 18px, #e0e0e0 18px); }
input[type=range]::-webkit-slider-thumb { appearance: none; width: 18px; height: 18px; border-radius: 50%; border: 3px solid #bbb; background: #fff; }
.pct { width: 50px; color: #000; }
.full { width: 24px; height: 24px; margin: 0 12px 0 26px; }
.fit { width: 24px; height: 24px; }
```
